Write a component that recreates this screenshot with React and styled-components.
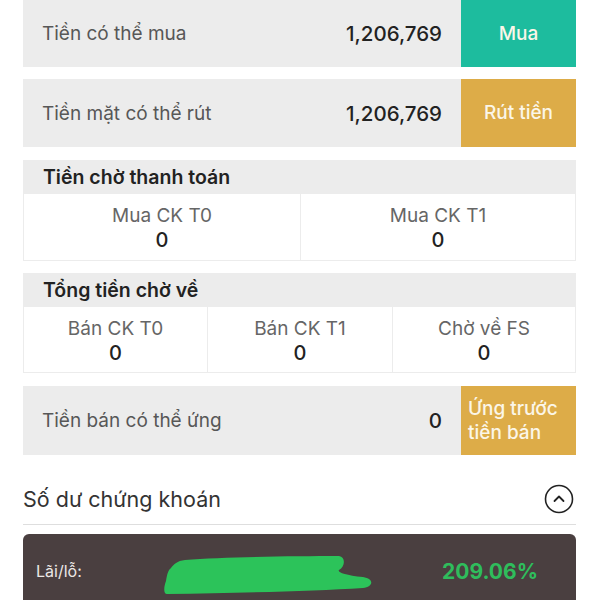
import React from "react";
import styled, { createGlobalStyle } from "styled-components";

const GlobalStyle = createGlobalStyle`
  body {
    margin: 0;
    background: #ffffff;
    font-family: Inter, Roboto, "Liberation Sans", Arial, sans-serif;
  }
`;

const Page = styled.div`
  width: 553px;
  margin-left: 23px;
  display: flex;
  flex-direction: column;
`;

const ActionRow = styled.div`
  display: flex;
  align-items: stretch;
  height: ${(p) => p.h}px;
  margin-top: ${(p) => p.mt}px;
  background: #ececec;
`;

const RowLabel = styled.div`
  flex: 1;
  display: flex;
  align-items: center;
  padding-left: 19px;
  font-size: 19px;
  color: #575757;
`;

const RowValue = styled.div`
  display: flex;
  align-items: center;
  padding-right: 19px;
  font-size: 20.5px;
  font-weight: 500;
  color: #222;
`;

const ActionButton = styled.div`
  width: 115px;
  display: flex;
  align-items: center;
  justify-content: ${(p) => (p.left ? "flex-start" : "center")};
  padding-left: ${(p) => (p.left ? "7px" : "0")};
  box-sizing: border-box;
  background: ${(p) => p.bg};
  color: #fbf6e8;
  font-size: 19px;
  font-weight: 500;
  line-height: 24px;
`;

const Section = styled.div`
  margin-top: ${(p) => p.mt}px;
  border: 1px solid #ececec;
  border-top: none;
`;

const SectionHead = styled.div`
  height: 34px;
  background: #ececec;
  display: flex;
  align-items: center;
  padding-left: 19px;
  font-size: 19.5px;
  font-weight: 600;
  color: #222;
`;

const Cells = styled.div`
  display: grid;
  grid-template-columns: ${(p) => p.cols};
  height: ${(p) => p.h}px;
`;

const Cell = styled.div`
  display: flex;
  flex-direction: column;
  align-items: center;
  justify-content: center;
  border-left: ${(p) => (p.first ? "none" : "1px solid #ececec")};
  padding-top: 3px;
`;

const CellLabel = styled.div`
  font-size: 19px;
  color: #666;
  line-height: 24px;
`;

const CellValue = styled.div`
  font-size: 20px;
  font-weight: 500;
  color: #222;
  line-height: 25px;
`;

const BalanceHead = styled.div`
  height: 70px;
  display: flex;
  align-items: center;
  justify-content: space-between;
  border-bottom: 1px solid #dedede;
  padding-top: 18px;
  box-sizing: border-box;
`;

const BalanceTitle = styled.div`
  font-size: 21.5px;
  color: #333;
`;

const ToggleIcon = styled.svg`
  width: 30px;
  height: 30px;
  margin-right: 2px;
`;

const PnlCard = styled.div`
  margin-top: 9px;
  height: 70px;
  background: #4a3f40;
  border-radius: 6px 6px 0 0;
  display: flex;
  align-items: center;
  padding: 4px 38px 0 13px;
  box-sizing: border-box;
`;

const PnlLabel = styled.div`
  font-size: 16px;
  color: #ece8e6;
  width: 127px;
`;

const Blot = styled.svg`
  width: 210px;
  height: 40px;
  margin-top: 8px;
`;

const PnlPercent = styled.div`
  margin-left: auto;
  font-size: 21px;
  font-weight: 700;
  color: #2fbd5c;
`;

function Toggle() {
  return (
    <ToggleIcon viewBox="0 0 30 30">
      <circle cx="15" cy="15" r="13.5" fill="none" stroke="#222" strokeWidth="1.6" />
      <path d="M10.5 17 L15 12.5 L19.5 17" fill="none" stroke="#222" strokeWidth="1.8" strokeLinecap="round" strokeLinejoin="round" />
    </ToggleIcon>
  );
}

export default function App() {
  return (
    <>
      <GlobalStyle />
      <Page>
        <ActionRow h={67} mt={0}>
          <RowLabel>Tiền có thể mua</RowLabel>
          <RowValue>1,206,769</RowValue>
          <ActionButton bg="#1dbc9e">Mua</ActionButton>
        </ActionRow>

        <ActionRow h={68} mt={12}>
          <RowLabel>Tiền mặt có thể rút</RowLabel>
          <RowValue>1,206,769</RowValue>
          <ActionButton bg="#ddac48">Rút tiền</ActionButton>
        </ActionRow>

        <Section mt={13}>
          <SectionHead>Tiền chờ thanh toán</SectionHead>
          <Cells cols="276px 1fr" h={66}>
            <Cell first>
              <CellLabel>Mua CK T0</CellLabel>
              <CellValue>0</CellValue>
            </Cell>
            <Cell>
              <CellLabel>Mua CK T1</CellLabel>
              <CellValue>0</CellValue>
            </Cell>
          </Cells>
        </Section>

        <Section mt={12}>
          <SectionHead>Tổng tiền chờ về</SectionHead>
          <Cells cols="183px 185px 1fr" h={65}>
            <Cell first>
              <CellLabel>Bán CK T0</CellLabel>
              <CellValue>0</CellValue>
            </Cell>
            <Cell>
              <CellLabel>Bán CK T1</CellLabel>
              <CellValue>0</CellValue>
            </Cell>
            <Cell>
              <CellLabel>Chờ về FS</CellLabel>
              <CellValue>0</CellValue>
            </Cell>
          </Cells>
        </Section>

        <ActionRow h={69} mt={13}>
          <RowLabel>Tiền bán có thể ứng</RowLabel>
          <RowValue>0</RowValue>
          <ActionButton bg="#ddac48" left>
            Ứng trước
            <br />
            tiền bán
          </ActionButton>
        </ActionRow>

        <BalanceHead>
          <BalanceTitle>Số dư chứng khoán</BalanceTitle>
          <Toggle />
        </BalanceHead>

        <PnlCard>
          <PnlLabel>Lãi/lỗ:</PnlLabel>
          <Blot viewBox="0 0 210 40">
            <path
              d="M22 5 C60 2 130 1 176 1 C183 2 182 12 176 15 C174 17 182 20 200 22 C212 24 210 32 200 33 C150 36 80 38 4 39 C0 39 1 31 3 26 C4 20 5 15 8 13 C11 9 14 6 22 5 Z"
              fill="#2cc35a"
            />
          </Blot>
          <PnlPercent>209.06%</PnlPercent>
        </PnlCard>
      </Page>
    </>
  );
}
